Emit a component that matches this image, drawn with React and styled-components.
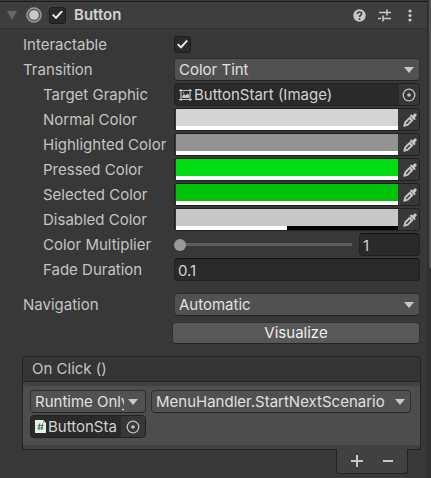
import React, { useState } from "react";
import styled, { createGlobalStyle } from "styled-components";

const Global = createGlobalStyle`
  * { box-sizing: border-box; }
  html, body, #root { height: 100%; }
  body { margin: 0; background: #383838; overflow: hidden; }
  body, button, input, select { font-family: Inter, sans-serif; font-size: 15px; color: #c4c4c4; }
  button, input, select { margin: 0; padding: 0; border: 0; background: none; outline: none; }
`;

const Window = styled.div`
  display: flex;
  min-height: 100%;
`;
const Inspector = styled.main`
  flex: 1;
  min-width: 0;
`;
const Gutter = styled.div`
  width: 4px;
  background: #323232;
  border-left: 1px solid #2f2f2f;
`;
const Thumb = styled.div`
  height: 268px;
  margin-left: 1px;
  background: #545454;
  border-radius: 0 0 0 3px;
`;

const Header = styled.header`
  display: flex;
  align-items: center;
  height: 28px;
  margin-top: 1px;
  padding: 0 5px 0 7px;
  background: #3e3e3e;
  border-top: 1px solid #1c1c1c;
  border-bottom: 1px solid #303030;
`;
const Title = styled.label`
  flex: 1;
  margin-left: 8px;
  font-weight: 600;
  line-height: 20px;
  color: #d2d2d2;
`;
const IconButton = styled.button`
  display: flex;
  flex: none;
  align-items: center;
  justify-content: center;
  width: ${(p) => p.$width || 25}px;
  align-self: stretch;
`;
const Tick = styled.input.attrs({ type: "checkbox" })`
  appearance: none;
  display: grid;
  place-items: center;
  flex: none;
  width: 17px;
  height: 17px;
  margin: 0;
  background: #2a2a2a;
  border: 1px solid #1c1c1c;
  border-radius: 3px;
  &:checked::before {
    content: "";
    width: 11px;
    height: 9px;
    background: #eeeeee;
    clip-path: polygon(0 52%, 14% 38%, 35% 66%, 85% 0, 100% 12%, 37% 98%);
  }
`;
const ComponentDot = styled.svg`
  margin: 0 7px 0 9px;
`;

const Fields = styled.section`
  padding: 3px 7px 0 23px;
`;
const Row = styled.div`
  display: grid;
  grid-template-columns: 151px minmax(0, 1fr);
  align-items: center;
  height: 25px;
  margin-top: ${(p) => (p.$apart ? 10 : 0)}px;
`;
const Label = styled.label`
  padding-left: ${(p) => (p.$nested ? 20 : 0)}px;
  line-height: 20px;
  white-space: nowrap;
`;

const SelectBox = styled.div`
  display: grid;
  align-items: center;
  min-width: 0;
  height: 23px;
  background: #515151;
  border: 1px solid #303030;
  border-bottom-color: #242424;
  border-radius: 4px;
  > * { grid-area: 1 / 1; }
  > svg { justify-self: end; margin-right: ${(p) => (p.$compact ? 7 : 5)}px; pointer-events: none; }
`;
const Select = styled.select`
  appearance: none;
  width: calc(100% - 21px);
  height: 21px;
  padding-left: 4px;
  line-height: 20px;
  color: #e0e0e0;
  overflow: hidden;
  text-overflow: clip;
`;

const Well = styled.div`
  display: flex;
  align-items: center;
  height: 23px;
  overflow: hidden;
  background: #2a2a2a;
  border: 1px solid #202020;
  border-radius: 4px;
  > svg { flex: none; margin: 0 2px 0 4px; }
`;
const ObjectName = styled.span`
  flex: 1;
  min-width: 0;
  overflow: hidden;
  white-space: nowrap;
  line-height: 20px;
  color: #d2d2d2;
`;
const PickButton = styled(IconButton)`
  background: #373737;
`;
const NumberInput = styled.input`
  width: 100%;
  min-width: 0;
  height: 23px;
  padding: 2px 3px 0;
  background: #2a2a2a;
  border: 1px solid #202020;
  border-top-color: #121212;
  border-radius: 4px;
  color: #d2d2d2;
`;

const ColorWell = styled.div`
  display: flex;
  height: 23px;
  border: 1px solid #202020;
  border-radius: 3px;
  overflow: hidden;
`;
const Swatch = styled.button`
  display: flex;
  flex: 1;
  flex-direction: column;
  margin-left: 1px;
  background: ${(p) => p.$color};
  &::before { content: ""; flex: 1; }
  &::after {
    content: "";
    width: 100%;
    height: 4px;
    background: linear-gradient(90deg, #fff ${(p) => p.$alpha}%, #000 ${(p) => p.$alpha}%);
  }
`;
const DropperButton = styled(IconButton)`
  justify-content: flex-end;
  padding-right: 2px;
`;

const SliderLine = styled.div`
  display: grid;
  grid-template-columns: minmax(0, 1fr) 61px;
  gap: 7px;
  align-items: center;
`;
const Slider = styled.input.attrs({ type: "range" })`
  appearance: none;
  width: 100%;
  height: 13px;
  background: linear-gradient(#5e5e5e, #5e5e5e) center / 100% 3px no-repeat;
  &::-webkit-slider-thumb {
    appearance: none;
    width: 12px;
    height: 12px;
    border-radius: 50%;
    background: #999999;
  }
`;
const Visualize = styled.button`
  display: block;
  width: calc(100% - 149px);
  height: 22px;
  margin: 5px 0 0 149px;
  background: #585858;
  border: 1px solid #303030;
  border-bottom-color: #242424;
  border-radius: 4px;
  line-height: 20px;
  color: #eeeeee;
`;

const Event = styled.section`
  margin: 12px 6px 0 22px;
`;
const EventTitle = styled.h2`
  height: 26px;
  margin: 0;
  padding-left: 9px;
  background: #353535;
  border: 1px solid #242424;
  border-radius: 3px 3px 0 0;
  font-size: 15px;
  font-weight: 400;
  line-height: 24px;
`;
const EventBody = styled.div`
  display: grid;
  grid-template-columns: 116px minmax(0, 1fr);
  gap: 2px 5px;
  height: 68px;
  padding: 8px 9px 0 7px;
  align-content: start;
  background: linear-gradient(#414141 4px, #4d4d4d 4px, #4d4d4d 63px, #414141 63px);
  border: 1px solid #242424;
  border-top: 0;
  border-radius: 0 0 3px 3px;
`;
const EventFooter = styled.footer`
  display: flex;
  width: 72px;
  height: 25px;
  margin: -1px 13px 0 auto;
  padding: 0 4px;
  background: #414141;
  border: 1px solid #242424;
  border-top: 0;
  border-radius: 0 0 3px 3px;
`;

const Arrow = () => (
  <svg width="10" height="6" viewBox="0 0 10 6"><path d="M0 0h10L5 6z" fill="#c8c8c8" /></svg>
);
const Target = () => (
  <svg width="14" height="14" viewBox="0 0 14 14">
    <circle cx="7" cy="7" r="5.8" fill="none" stroke="#c4c4c4" strokeWidth="1.3" />
    <circle cx="7" cy="7" r="1.8" fill="#c4c4c4" />
  </svg>
);
const Dropper = () => (
  <svg width="14" height="14" viewBox="0 0 14 14">
    <path d="M7.200 2.200 8.300 1.600 9.500 2.500C10.800.7 12-.1 13.100.8c1 1 .6 2.200-1.300 3.700l.9 1.200-.8 1.200-1.200-.2L6.800 3z" fill="#c4c4c4" />
    <path d="M7.200 4.400 2.400 9.200 1.300 12.700 4.800 11.600 9.600 6.800" fill="none" stroke="#c4c4c4" strokeWidth="2" strokeLinejoin="round" />
    <path d="M7 3.800 10.200 7 8.300 8.300 5.700 5.700z" fill="#c4c4c4" />
  </svg>
);
const ImageIcon = () => (
  <svg width="13" height="12" viewBox="0 0 13 12">
    <path d="M2 0v12M11 0v12M0 1.500h13M0 10.500h13" fill="none" stroke="#c4c4c4" strokeWidth="1.200" />
    <path d="M3.200 9V7l1.800-2 1.800 1.500L8.500 4.200l1.500 2V9z" fill="#c4c4c4" />
    <circle cx="4.600" cy="3.800" r=".8" fill="#c4c4c4" />
  </svg>
);
const ScriptIcon = () => (
  <svg width="11" height="13" viewBox="0 0 11 13">
    <path d="M0 0h8l3 3v10H0z" fill="#e8f0e8" />
    <path d="M8 0v3h3z" fill="#b4bcb4" />
    <path d="M4.600 3.500 3.800 10M7.500 3.500 6.700 10M2.600 5.500h6M2.300 8h6" fill="none" stroke="#4c7a58" strokeWidth="1.200" />
  </svg>
);

function Dropdown({ id, value, label, compact }) {
  return (
    <SelectBox $compact={compact}>
      <Select id={id} aria-label={label} defaultValue={value}>
        <option>{value}</option>
      </Select>
      <Arrow />
    </SelectBox>
  );
}

const colors = [
  ["Normal Color", "#d4d4d4", 100],
  ["Highlighted Color", "#939393", 100],
  ["Pressed Color", "#00dc14", 100],
  ["Selected Color", "#00c20a", 100],
  ["Disabled Color", "#c8c8c8", 50],
];

export default function App() {
  const [multiplier, setMultiplier] = useState("1");
  return (
    <Window>
      <Global />
      <Inspector>
        <Header>
          <IconButton $width={10} aria-label="Collapse">
            <svg width="10" height="9" viewBox="0 0 10 9"><path d="M0 0h10L5 9z" fill="#686868" /></svg>
          </IconButton>
          <ComponentDot width="16" height="16" viewBox="0 0 16 16">
            <circle cx="8" cy="8" r="7" fill="#5c5c5c" stroke="#999" strokeWidth="1.500" />
            <circle cx="8" cy="8" r="4.800" fill="#c8c8c8" />
          </ComponentDot>
          <Tick id="enabled" defaultChecked />
          <Title htmlFor="enabled">Button</Title>
          <IconButton aria-label="Help">
            <svg width="13" height="13" viewBox="0 0 13 13">
              <circle cx="6.500" cy="6.500" r="6.200" fill="#c8c8c8" />
              <path d="M4.400 5C4.400 2.300 8.600 2.400 8.600 4.800 8.600 6.300 6.500 6.200 6.500 8" fill="none" stroke="#3e3e3e" strokeWidth="1.600" />
              <circle cx="6.500" cy="10" r="1" fill="#3e3e3e" />
            </svg>
          </IconButton>
          <IconButton aria-label="Presets">
            <svg width="13" height="13" viewBox="0 0 13 13">
              <path d="M1 3.500h8M9 3.500h4M9 .5v6M0 9.500h3M5 9.500h8M5 6.500v6" fill="none" stroke="#c8c8c8" strokeWidth="1.600" />
            </svg>
          </IconButton>
          <IconButton aria-label="More">
            <svg width="4" height="13" viewBox="0 0 4 13" fill="#c8c8c8">
              <circle cx="2" cy="2" r="1.600" /><circle cx="2" cy="6.500" r="1.600" /><circle cx="2" cy="11" r="1.600" />
            </svg>
          </IconButton>
        </Header>
        <Fields>
          <Row><Label htmlFor="interactable">Interactable</Label><Tick id="interactable" defaultChecked /></Row>
          <Row><Label htmlFor="transition">Transition</Label><Dropdown id="transition" value="Color Tint" /></Row>
          <Row>
            <Label htmlFor="graphic" $nested>Target Graphic</Label>
            <Well>
              <ImageIcon />
              <ObjectName>ButtonStart (Image)</ObjectName>
              <PickButton $width={20} id="graphic"><Target /></PickButton>
            </Well>
          </Row>
          {colors.map(([name, color, alpha]) => (
            <Row key={name}>
              <Label htmlFor={name} $nested>{name}</Label>
              <ColorWell>
                <Swatch id={name} $color={color} $alpha={alpha} />
                <DropperButton $width={21} aria-label={`Pick ${name}`}><Dropper /></DropperButton>
              </ColorWell>
            </Row>
          ))}
          <Row>
            <Label htmlFor="multiplier" $nested>Color Multiplier</Label>
            <SliderLine>
              <Slider id="multiplier" min="1" max="5" value={multiplier} onChange={(e) => setMultiplier(e.target.value)} />
              <NumberInput aria-label="Multiplier value" value={multiplier} onChange={(e) => setMultiplier(e.target.value)} />
            </SliderLine>
          </Row>
          <Row><Label htmlFor="fade" $nested>Fade Duration</Label><NumberInput id="fade" defaultValue="0.1" /></Row>
          <Row $apart><Label htmlFor="navigation">Navigation</Label><Dropdown id="navigation" value="Automatic" /></Row>
          <Visualize>Visualize</Visualize>
        </Fields>
        <Event>
          <EventTitle>On Click ()</EventTitle>
          <EventBody>
            <Dropdown label="Call state" value="Runtime Only" compact />
            <Dropdown label="Function" value="MenuHandler.StartNextScenario" />
            <Well>
              <ScriptIcon />
              <ObjectName>ButtonSta</ObjectName>
              <PickButton $width={24} aria-label="Pick object"><Target /></PickButton>
            </Well>
          </EventBody>
          <EventFooter>
            <IconButton $width={31} aria-label="Add"><svg width="12" height="12" viewBox="0 0 12 12"><path d="M6 0v12M0 6h12" stroke="#c8c8c8" strokeWidth="2" /></svg></IconButton>
            <IconButton $width={31} aria-label="Remove"><svg width="10" height="2" viewBox="0 0 10 2"><path d="M0 1h10" stroke="#c8c8c8" strokeWidth="2" /></svg></IconButton>
          </EventFooter>
        </Event>
      </Inspector>
      <Gutter><Thumb /></Gutter>
    </Window>
  );
}
